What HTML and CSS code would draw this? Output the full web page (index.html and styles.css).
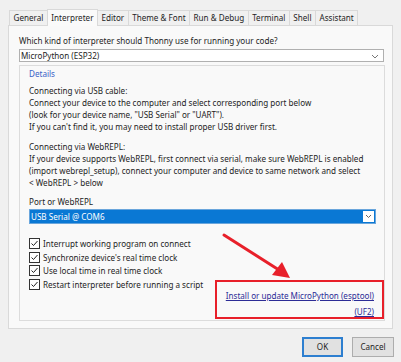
FILE: index.html
```html
<!DOCTYPE html>
<html>
<head>
<meta charset="utf-8">
<link rel="stylesheet" href="styles.css">
</head>
<body>
<div class="dialog">
  <div class="tabs">
    <div class="tab">General</div>
    <div class="tab active">Interpreter</div>
    <div class="tab">Editor</div>
    <div class="tab">Theme &amp; Font</div>
    <div class="tab">Run &amp; Debug</div>
    <div class="tab">Terminal</div>
    <div class="tab">Shell</div>
    <div class="tab">Assistant</div>
  </div>
  <div class="panel">
    <div class="question">Which kind of interpreter should Thonny use for running your code?</div>
    <div class="combo">
      <span>MicroPython (ESP32)</span>
      <svg class="chev" width="8" height="5" viewBox="0 0 8 5"><path d="M1 1 L4 4 L7 1" fill="none" stroke="#777" stroke-width="1"/></svg>
    </div>
    <div class="frame">
      <div class="frame-title">Details</div>
      <div class="para">Connecting via USB cable:<br>Connect your device to the computer and select corresponding port below<br>(look for your device name, "USB Serial" or "UART").<br>If you can't find it, you may need to install proper USB driver first.</div>
      <div class="para">Connecting via WebREPL:<br>If your device supports WebREPL, first connect via serial, make sure WebREPL is enabled<br>(import webrepl_setup), connect your computer and device to same network and select<br>&lt; WebREPL &gt; below</div>
      <div class="port-label">Port or WebREPL</div>
      <div class="port">
        <span class="port-text">USB Serial @ COM6</span>
        <span class="port-btn"><svg width="7" height="5" viewBox="0 0 7 5"><path d="M1 1 L3.5 3.5 L6 1" fill="none" stroke="#666" stroke-width="1"/></svg></span>
      </div>
      <div class="checks">
        <div class="check"><span class="box"><svg width="9" height="9" viewBox="0 0 9 9"><path d="M1.5 4.5 L3.5 6.5 L7.5 2" fill="none" stroke="#222" stroke-width="1"/></svg></span>Interrupt working program on connect</div>
        <div class="check"><span class="box"><svg width="9" height="9" viewBox="0 0 9 9"><path d="M1.5 4.5 L3.5 6.5 L7.5 2" fill="none" stroke="#222" stroke-width="1"/></svg></span>Synchronize device's real time clock</div>
        <div class="check"><span class="box"><svg width="9" height="9" viewBox="0 0 9 9"><path d="M1.5 4.5 L3.5 6.5 L7.5 2" fill="none" stroke="#222" stroke-width="1"/></svg></span>Use local time in real time clock</div>
        <div class="check"><span class="box"><svg width="9" height="9" viewBox="0 0 9 9"><path d="M1.5 4.5 L3.5 6.5 L7.5 2" fill="none" stroke="#222" stroke-width="1"/></svg></span>Restart interpreter before running a script</div>
      </div>
      <div class="links">
        <a class="link">Install or update MicroPython (esptool)</a>
        <a class="link">(UF2)</a>
      </div>
    </div>
  </div>
  <div class="buttons">
    <div class="btn default">OK</div>
    <div class="btn">Cancel</div>
  </div>
  <svg class="arrow" width="90" height="60" viewBox="0 0 90 60">
    <line x1="3" y1="3" x2="58" y2="38" stroke="#e8202a" stroke-width="3" stroke-linecap="round"/>
    <path d="M69 46 L51 43 L61 30 Z" fill="#e8202a"/>
  </svg>
</div>
</body>
</html>
```
FILE: styles.css
```css
html, body {
  margin: 0;
  padding: 0;
  background: #f0f0f0;
}
body {
  font-family: "Noto Sans", "Open Sans", sans-serif;
  font-size: 8.1px;
  color: #1e1e1e;
  width: 401px;
  height: 362px;
  overflow: hidden;
}
.dialog {
  position: relative;
  padding: 9px 8px 0 8px;
}
.tabs {
  display: flex;
  padding-left: 1px;
  height: 16px;
  align-items: flex-end;
}
.tab {
  height: 15px;
  line-height: 14px;
  padding: 0 3.5px;
  border: 1px solid #d9d9d9;
  border-bottom: none;
  margin-right: -1px;
  background: #f0f0f0;
  box-sizing: border-box;
}
.tab.active {
  height: 17px;
  line-height: 16px;
  background: #fafafa;
  position: relative;
  z-index: 2;
  margin-bottom: -1px;
}
.panel {
  border: 1px solid #d9d9d9;
  background: #f9f9f9;
  height: 304px;
  box-sizing: border-box;
  padding: 9px 9px 0 10px;
}
.question {
  line-height: 12px;
  margin-bottom: 2px;
}
.combo {
  display: flex;
  justify-content: space-between;
  align-items: center;
  height: 13px;
  border: 1px solid #b0b0b0;
  background: #fff;
  padding: 0 4px 0 1px;
  box-sizing: border-box;
  width: 365px;
}
.chev { margin-top: 1px; }
.frame {
  margin-top: 3px;
  border: 1px solid #dcdcdc;
  width: 366px;
  height: 256px;
  box-sizing: border-box;
  padding: 2px 9px 0 9px;
}
.frame-title {
  color: #3a62c8;
  line-height: 12px;
  margin-bottom: 5px;
}
.para {
  line-height: 12px;
  margin-bottom: 8px;
  white-space: nowrap;
}
.port-label {
  line-height: 12px;
  margin-top: -1px;
  margin-bottom: 1px;
}
.port {
  display: flex;
  align-items: center;
  justify-content: space-between;
  height: 15px;
  background: #0a78d4;
  border: 1px solid #6aa6dc;
  box-sizing: border-box;
  width: 347px;
  color: #fff;
  padding: 0 1px 0 1px;
}
.port-btn {
  width: 11px;
  height: 11px;
  background: #fff;
  display: flex;
  align-items: center;
  justify-content: center;
}
.checks {
  margin-top: 13px;
}
.check {
  display: flex;
  align-items: center;
  height: 13.5px;
}
.box {
  width: 9px;
  height: 9px;
  border: 1px solid #333;
  background: #fff;
  margin-right: 3px;
  display: flex;
}
.links {
  margin-left: 186px;
  margin-top: -11px;
  width: 169px;
  height: 39px;
  border: 2px solid #e8202a;
  box-sizing: border-box;
  display: flex;
  flex-direction: column;
  align-items: flex-end;
  padding: 8px 8px 0 0;
  gap: 4px;
  position: relative;
}
.link {
  color: #2c2c96;
  text-decoration: underline;
  line-height: 12px;
}
.buttons {
  display: flex;
  justify-content: flex-end;
  gap: 9px;
  padding: 8px 0 0 0;
  margin-right: -1px;
}
.btn {
  width: 42px;
  height: 20px;
  line-height: 18px;
  text-align: center;
  border: 1px solid #adadad;
  background: #e1e1e1;
  box-sizing: border-box;
}
.btn.default {
  border: 2px solid #2d7fd0;
  line-height: 16px;
  width: 41px;
}
.arrow {
  position: absolute;
  left: 221px;
  top: 232px;
}
```
